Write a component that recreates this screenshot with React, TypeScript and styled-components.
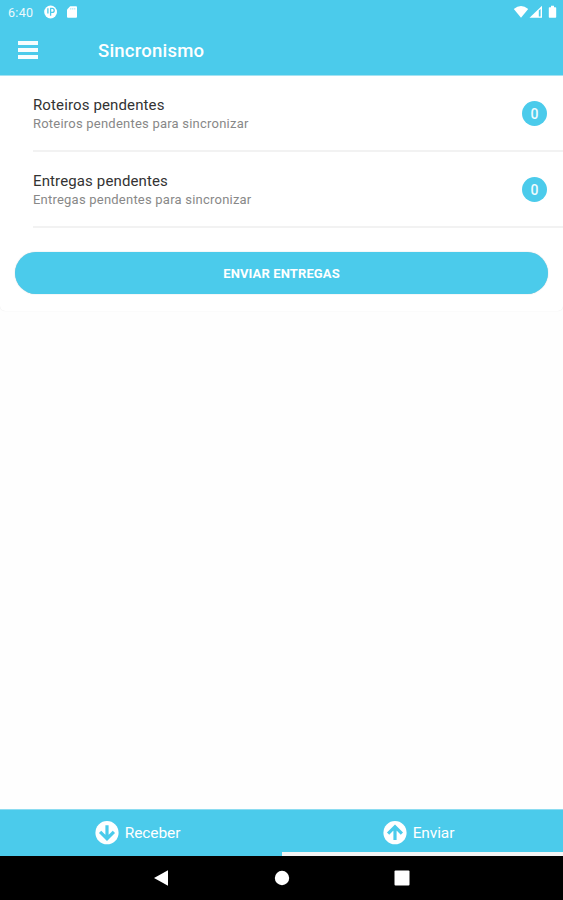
import React from "react";
import styled, { createGlobalStyle } from "styled-components";

const BLUE = "#4bcbeb";

const GlobalStyle = createGlobalStyle`
  * { box-sizing: border-box; }
  body { margin: 0; background: #fff; font-family: Roboto, sans-serif; }
`;

const Screen = styled.div`
  display: flex;
  flex-direction: column;
  width: 563px;
  height: 900px;
  overflow: hidden;
  background: #fefefe;
`;

const Header = styled.header`
  height: 76px;
  flex: none;
  background: ${BLUE};
  border-bottom: 1px solid #a5e5f5;
  color: #fff;
`;

const StatusBar = styled.div`
  display: flex;
  align-items: center;
  height: 25px;
  padding: 0 6px 0 8px;
`;

const Clock = styled.span`
  width: 36px;
  font-size: 12.5px;
  letter-spacing: 0.3px;
  opacity: 0.9;
`;

const StatusIcons = styled.div<{ $end?: boolean }>`
  display: flex;
  align-items: center;
  margin: -1px 0 0 ${(p) => (p.$end ? "auto" : "0")};
`;

const TitleBar = styled.div`
  display: flex;
  align-items: center;
  height: 50px;
  padding-left: 18px;
`;

const MenuButton = styled.button`
  display: flex;
  flex-direction: column;
  gap: 3px;
  width: 80px;
  padding: 0;
  border: 0;
  background: none;
`;

const MenuLine = styled.span`
  width: 20px;
  height: 4px;
  background: #fff;
  opacity: 0.95;
`;

const Title = styled.h1`
  margin: 0;
  padding-top: 1px;
  font-size: 18.5px;
  font-weight: 500;
  letter-spacing: 0.22px;
`;

const Card = styled.main`
  height: 235px;
  background: #fff;
  border-radius: 0 0 5px 5px;
  box-shadow: 0 0 1px rgba(0, 0, 0, 0.12);
`;

const Row = styled.section`
  display: flex;
  align-items: center;
  justify-content: space-between;
  height: 76px;
  margin-left: 33px;
  padding-right: 16px;
  border-bottom: 2px solid #f2f2f2;
`;

const RowText = styled.div`
  padding-top: 2px;
`;

const RowTitle = styled.div`
  font-size: 15px;
  line-height: 20px;
  letter-spacing: 0.13px;
  color: #333;
`;

const RowNote = styled.div`
  font-size: 13px;
  line-height: 18px;
  letter-spacing: 0.22px;
  color: #888;
`;

const Badge = styled.span`
  display: flex;
  align-items: center;
  justify-content: center;
  width: 25px;
  height: 25px;
  padding-top: 1px;
  border-radius: 50%;
  background: ${BLUE};
  color: #effbfe;
  font-size: 14px;
  font-weight: 500;
`;

const SendButton = styled.button`
  display: block;
  width: 533px;
  height: 42px;
  margin: 24px 0 0 15px;
  padding: 0;
  border: 0;
  border-radius: 21px;
  background: ${BLUE};
  box-shadow: 0 0 1px rgba(40, 110, 130, 0.5);
  color: #fff;
  font: 700 13px Roboto, sans-serif;
  letter-spacing: 0.12px;
`;

const Tabs = styled.nav`
  display: flex;
  height: 47px;
  margin-top: auto;
  flex: none;
  background: ${BLUE};
  border-top: 1px solid #8bdcf1;
`;

const Tab = styled.button<{ $active?: boolean }>`
  display: flex;
  width: ${(p) => (p.$active ? "281px" : "282px")};
  flex: none;
  align-items: center;
  justify-content: center;
  gap: 6px;
  padding: ${(p) => (p.$active ? "3px 8px 0 0" : "3px 7px 0 0")};
  border: 0;
  border-bottom: 4px solid ${(p) => (p.$active ? "#f4f4f4" : BLUE)};
  background: none;
  color: #fff;
  font: 400 15.5px Roboto, sans-serif;
  letter-spacing: -0.1px;
`;

const NavBar = styled.footer`
  display: flex;
  align-items: center;
  justify-content: center;
  gap: 104px;
  height: 44px;
  flex: none;
  background: #000;
`;

function ArrowCircle({ up }: { up?: boolean }) {
  return (
    <svg width="24" height="24" viewBox="0 0 24 24">
      <circle cx="12" cy="11.7" r="11.6" fill="#fff" />
      <path
        d="M12 4.3v13.2M5.1 10.8l6.9 6.9 6.9-6.9"
        fill="none"
        stroke={BLUE}
        strokeWidth="3.2"
        transform={up ? "rotate(180 12 11.7)" : undefined}
      />
    </svg>
  );
}

const pending = [
  { title: "Roteiros pendentes", note: "Roteiros pendentes para sincronizar", count: 0 },
  { title: "Entregas pendentes", note: "Entregas pendentes para sincronizar", count: 0 },
];

export default function App() {
  return (
    <Screen>
      <GlobalStyle />
      <Header>
        <StatusBar>
          <Clock>6:40</Clock>
          <StatusIcons>
            <svg width="34" height="14" viewBox="0 0 34 14">
              <circle cx="6.6" cy="7" r="6.4" fill="#fff" />
              <path d="M3.9 3.2v5.2M6.6 2.8v8M7 3.4h1.2a2 2 0 0 1 0 4H7" fill="none" stroke={BLUE} strokeWidth="1.3" />
              <path d="M26.2 1.2H32q1 0 1 1v9.6q0 1-1 1h-8q-1 0-1-1V4.4z" fill="#fff" />
              <path d="M26.8 3v1.6M28.8 3v1.6M30.8 3v1.6" stroke={BLUE} strokeWidth=".5" />
            </svg>
          </StatusIcons>
          <StatusIcons $end>
            <svg width="44" height="14" viewBox="0 0 44 14">
              <path d="M.8 4Q8-1.8 15.2 4L8 12.8z" fill="#fff" />
              <path d="M29 .8v12H16.5z" fill="#fff" />
              <path d="M25.8 5.6 27.6 4v7.4h-1.8z" fill={BLUE} />
              <path d="M36.5 2.2H38V.8h3v1.4h1.5q.7 0 .7.8v9q0 .8-.7.8h-6q-.7 0-.7-.8V3q0-.8.7-.8z" fill="#fff" />
            </svg>
          </StatusIcons>
        </StatusBar>
        <TitleBar>
          <MenuButton aria-label="Menu">
            <MenuLine />
            <MenuLine />
            <MenuLine />
          </MenuButton>
          <Title>Sincronismo</Title>
        </TitleBar>
      </Header>
      <Card>
        {pending.map((item) => (
          <Row key={item.title}>
            <RowText>
              <RowTitle>{item.title}</RowTitle>
              <RowNote>{item.note}</RowNote>
            </RowText>
            <Badge>{item.count}</Badge>
          </Row>
        ))}
        <SendButton>ENVIAR ENTREGAS</SendButton>
      </Card>
      <Tabs>
        <Tab>
          <ArrowCircle />
          Receber
        </Tab>
        <Tab $active>
          <ArrowCircle up />
          Enviar
        </Tab>
      </Tabs>
      <NavBar>
        <svg width="16" height="16" viewBox="0 0 16 16">
          <path d="M0 8 14 .3v15.4z" fill="#fff" />
        </svg>
        <svg width="16" height="16" viewBox="0 0 16 16">
          <circle cx="8" cy="8" r="7.2" fill="#fff" />
        </svg>
        <svg width="16" height="16" viewBox="0 0 16 16">
          <rect x=".5" y=".5" width="15" height="15" rx="1" fill="#fff" />
        </svg>
      </NavBar>
    </Screen>
  );
}
